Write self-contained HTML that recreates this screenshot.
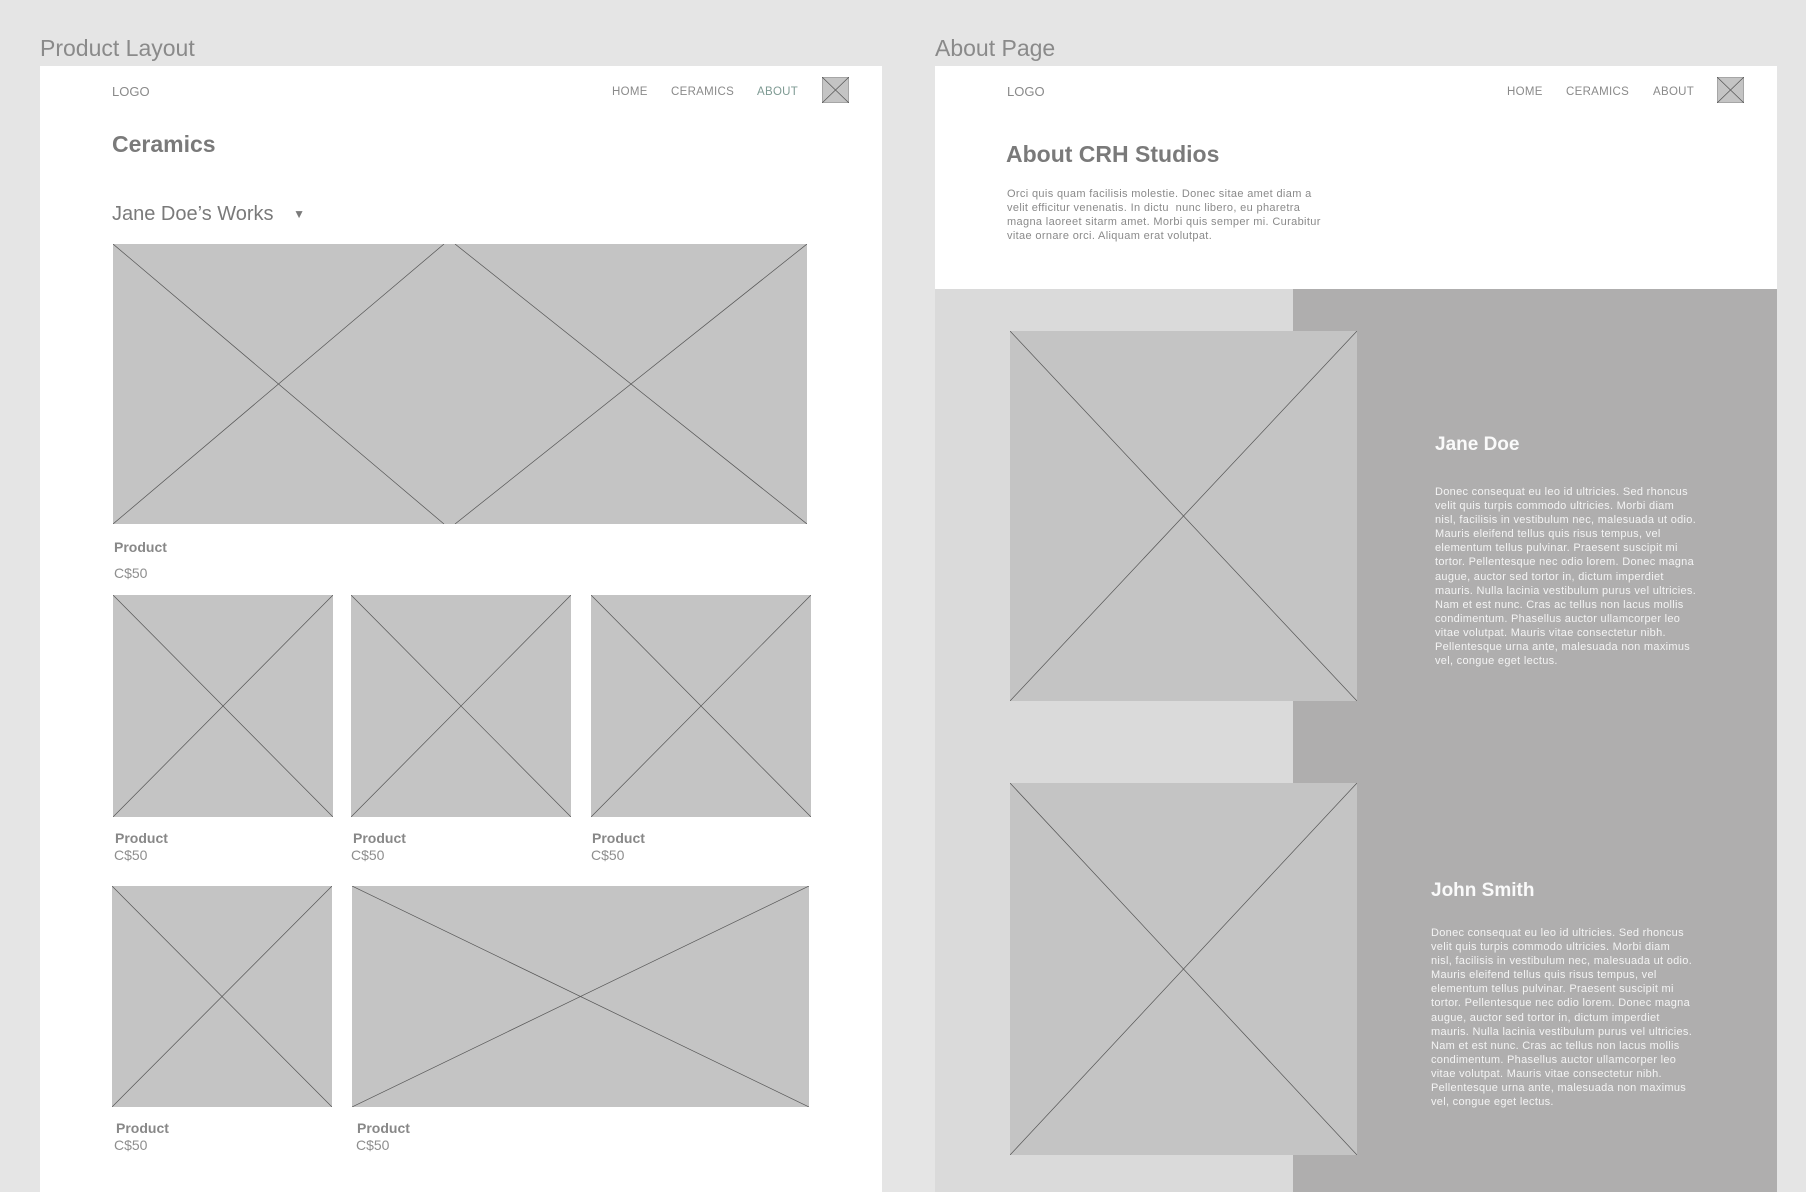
<!DOCTYPE html>
<html><head><meta charset="utf-8"><style>
*{margin:0;padding:0;box-sizing:border-box}
body{width:1806px;height:1192px;background:#e5e5e5;position:relative;overflow:hidden;font-family:"Liberation Sans",sans-serif;color:#7a7a7a}
.a{position:absolute;white-space:nowrap}
.panel{position:absolute;background:#fff}
svg.ph{position:absolute;display:block}
.nav{font-size:11.5px;letter-spacing:0.3px;color:#8a8a8a}
.lbl{font-size:14px;font-weight:bold;color:#888}
.pr{font-size:14px;color:#8e8e8e}
.para{position:absolute;white-space:nowrap}
</style></head><body>
<div class="a" style="left:40px;top:35px;font-size:23px;color:#8a8a8a">Product Layout</div>
<div class="a" style="left:935px;top:35px;font-size:23px;color:#8a8a8a">About Page</div>

<div class="panel" style="left:40px;top:66px;width:842px;height:1126px"></div>
<div class="a" style="left:112px;top:84px;font-size:13px;color:#8a8a8a">LOGO</div>
<div class="a nav" style="left:612px;top:86px">HOME</div>
<div class="a nav" style="left:671px;top:86px">CERAMICS</div>
<div class="a nav" style="left:757px;top:86px;color:#7e9a93">ABOUT</div>
<svg class="ph" style="left:822px;top:77px" width="27" height="26"><rect width="27" height="26" fill="#c4c4c4" stroke="#888" stroke-width="1"/><path d="M0 0L27 26M27 0L0 26" stroke="#555" stroke-width="0.7"/></svg>
<div class="a" style="left:112px;top:131px;font-size:23px;font-weight:bold;color:#7a7a7a">Ceramics</div>
<div class="a" style="left:112px;top:203px;font-size:20px;color:#7a7a7a">Jane Doe’s Works <span style="font-size:12px;margin-left:14px;vertical-align:2px">▼</span></div>

<svg class="ph" style="left:113px;top:244px" width="694" height="280"><rect width="694" height="280" fill="#c4c4c4"/><path d="M0 0L331 280M331 0L0 280M342 0L694 280M694 0L342 280" stroke="#555" stroke-width="0.7" fill="none"/></svg>
<div class="a lbl" style="left:114px;top:539px">Product</div>
<div class="a pr" style="left:114px;top:565px">C$50</div>

<svg class="ph" style="left:113px;top:595px" width="220" height="222"><rect width="220" height="222" fill="#c4c4c4"/><path d="M0 0L220 222M220 0L0 222" stroke="#555" stroke-width="0.7"/></svg>
<svg class="ph" style="left:351px;top:595px" width="220" height="222"><rect width="220" height="222" fill="#c4c4c4"/><path d="M0 0L220 222M220 0L0 222" stroke="#555" stroke-width="0.7"/></svg>
<svg class="ph" style="left:591px;top:595px" width="220" height="222"><rect width="220" height="222" fill="#c4c4c4"/><path d="M0 0L220 222M220 0L0 222" stroke="#555" stroke-width="0.7"/></svg>
<div class="a lbl" style="left:115px;top:830px">Product</div><div class="a pr" style="left:114px;top:847px">C$50</div>
<div class="a lbl" style="left:353px;top:830px">Product</div><div class="a pr" style="left:351px;top:847px">C$50</div>
<div class="a lbl" style="left:592px;top:830px">Product</div><div class="a pr" style="left:591px;top:847px">C$50</div>

<svg class="ph" style="left:112px;top:886px" width="220" height="221"><rect width="220" height="221" fill="#c4c4c4"/><path d="M0 0L220 221M220 0L0 221" stroke="#555" stroke-width="0.7"/></svg>
<svg class="ph" style="left:352px;top:886px" width="457" height="221"><rect width="457" height="221" fill="#c4c4c4"/><path d="M0 0L457 221M457 0L0 221" stroke="#555" stroke-width="0.7"/></svg>
<div class="a lbl" style="left:116px;top:1120px">Product</div><div class="a pr" style="left:114px;top:1137px">C$50</div>
<div class="a lbl" style="left:357px;top:1120px">Product</div><div class="a pr" style="left:356px;top:1137px">C$50</div>

<div class="panel" style="left:935px;top:66px;width:842px;height:223px"></div>
<div style="position:absolute;left:935px;top:289px;width:358px;height:903px;background:#dadada"></div>
<div style="position:absolute;left:1293px;top:289px;width:484px;height:903px;background:#afaeae"></div>
<div class="a" style="left:1007px;top:84px;font-size:13px;color:#8a8a8a">LOGO</div>
<div class="a nav" style="left:1507px;top:86px">HOME</div>
<div class="a nav" style="left:1566px;top:86px">CERAMICS</div>
<div class="a nav" style="left:1653px;top:86px">ABOUT</div>
<svg class="ph" style="left:1717px;top:77px" width="27" height="26"><rect width="27" height="26" fill="#c4c4c4" stroke="#888" stroke-width="1"/><path d="M0 0L27 26M27 0L0 26" stroke="#555" stroke-width="0.7"/></svg>
<div class="a" style="left:1006px;top:141px;font-size:23px;font-weight:bold;color:#7a7a7a">About CRH Studios</div>
<div class="para" style="left:1007px;top:187px;font-size:11px;line-height:14px;letter-spacing:0.35px;color:#8a8a8a">Orci quis quam facilisis molestie. Donec sitae amet diam a<br>velit efficitur venenatis. In dictu&nbsp; nunc libero, eu pharetra<br>magna laoreet sitarm amet. Morbi quis semper mi. Curabitur<br>vitae ornare orci. Aliquam erat volutpat.</div>

<svg class="ph" style="left:1010px;top:331px" width="347" height="370"><rect width="347" height="370" fill="#c4c4c4"/><path d="M0 0L347 370M347 0L0 370" stroke="#555" stroke-width="0.7"/></svg>
<div class="a" style="left:1435px;top:434px;font-size:19px;font-weight:bold;color:#fafafa">Jane Doe</div>
<div class="para" style="left:1435px;top:485px;font-size:11px;line-height:14.1px;letter-spacing:0.3px;color:#f4f4f4">Donec consequat eu leo id ultricies. Sed rhoncus<br>velit quis turpis commodo ultricies. Morbi diam<br>nisl, facilisis in vestibulum nec, malesuada ut odio.<br>Mauris eleifend tellus quis risus tempus, vel<br>elementum tellus pulvinar. Praesent suscipit mi<br>tortor. Pellentesque nec odio lorem. Donec magna<br>augue, auctor sed tortor in, dictum imperdiet<br>mauris. Nulla lacinia vestibulum purus vel ultricies.<br>Nam et est nunc. Cras ac tellus non lacus mollis<br>condimentum. Phasellus auctor ullamcorper leo<br>vitae volutpat. Mauris vitae consectetur nibh.<br>Pellentesque urna ante, malesuada non maximus<br>vel, congue eget lectus.</div>

<svg class="ph" style="left:1010px;top:783px" width="347" height="372"><rect width="347" height="372" fill="#c4c4c4"/><path d="M0 0L347 372M347 0L0 372" stroke="#555" stroke-width="0.7"/></svg>
<div class="a" style="left:1431px;top:880px;font-size:19px;font-weight:bold;color:#fafafa">John Smith</div>
<div class="para" style="left:1431px;top:926px;font-size:11px;line-height:14.1px;letter-spacing:0.3px;color:#f4f4f4">Donec consequat eu leo id ultricies. Sed rhoncus<br>velit quis turpis commodo ultricies. Morbi diam<br>nisl, facilisis in vestibulum nec, malesuada ut odio.<br>Mauris eleifend tellus quis risus tempus, vel<br>elementum tellus pulvinar. Praesent suscipit mi<br>tortor. Pellentesque nec odio lorem. Donec magna<br>augue, auctor sed tortor in, dictum imperdiet<br>mauris. Nulla lacinia vestibulum purus vel ultricies.<br>Nam et est nunc. Cras ac tellus non lacus mollis<br>condimentum. Phasellus auctor ullamcorper leo<br>vitae volutpat. Mauris vitae consectetur nibh.<br>Pellentesque urna ante, malesuada non maximus<br>vel, congue eget lectus.</div>
</body></html>
